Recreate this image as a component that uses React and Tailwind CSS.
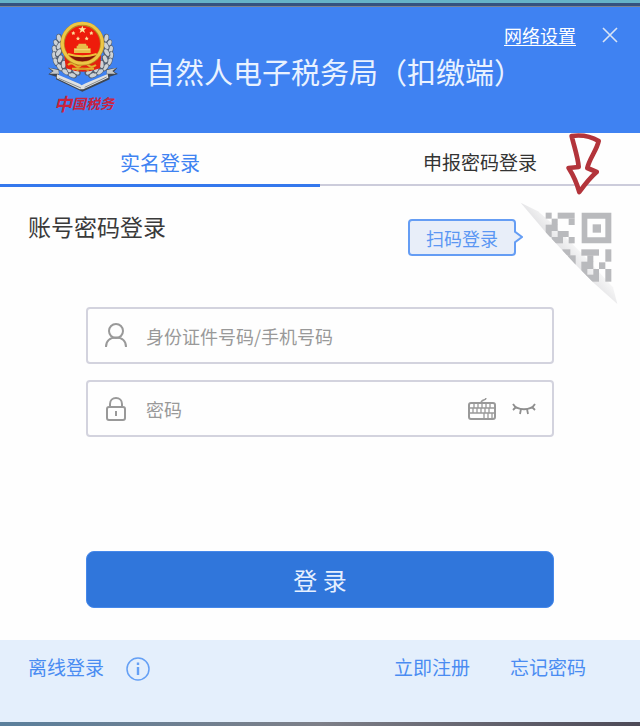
import React, { useState } from 'react';

const qrModules = [
  // top left block
  [83, 38, 18, 18], [119, 38, 51, 18], [101, 56, 18, 19], [152, 56, 18, 19],
  [83, 74, 36, 19], [83, 93, 18, 18], [119, 93, 33, 18], [101, 111, 34, 19], [152, 111, 18, 19],
  // bottom left block
  [133, 148, 24, 19], [150, 166, 23, 28],
  // bottom right block
  [190, 148, 53, 19], [262, 148, 18, 37], [208, 166, 18, 20], [190, 185, 36, 22],
  [243, 187, 19, 20], [190, 207, 18, 19], [226, 207, 17, 19], [262, 207, 18, 38], [204, 224, 39, 21],
];

// leaves of the wreath, mirrored around x = 116
const leaves = [
  [46, 58, -10], [38, 74, -25], [33, 92, -15], [32, 111, -10], [37, 129, -25], [49, 145, -40], [66, 158, -55], [86, 168, -70],
  [46, 82, 25], [44, 102, 30], [49, 121, 20], [60, 137, 5], [76, 150, -20], [98, 158, -50],
];

const Emblem = () => (
  <svg className="w-20 h-[76px]" viewBox="0 0 240 228" aria-hidden="true">
    {[false, true].map((flip) => (
      <g key={String(flip)} transform={flip ? 'translate(232 0) scale(-1 1)' : undefined}>
        {leaves.map(([x, y, r], i) => (
          <g key={i} transform={`translate(${x} ${y}) rotate(${r})`}>
            <ellipse rx="9" ry="14" fill="#56606e" />
            <ellipse cx="-1" cy="-1" rx="6" ry="11" fill="#cdd2d6" />
          </g>
        ))}
      </g>
    ))}
    <path d="M60 108 L76 122 H156 L172 108 L168 148 Q117 168 66 148 Z" fill="#e3210f" />
    <path d="M72 138 q10-10 20 0 t20 0 t20 0 t24 0 M84 149 h66" fill="none" stroke="#e2b22e" strokeWidth="6" />
    <path d="M98 155 q17-12 36 0" fill="none" stroke="#d39a25" strokeWidth="5" />
    <circle cx="115" cy="74" r="66" fill="#b78a22" />
    <circle cx="115" cy="73" r="60" fill="none" stroke="#edc746" strokeWidth="9" />
    <circle cx="115" cy="74" r="53" fill="#ee1c0b" />
    <path d="M73 106 Q116 120 158 106 Q140 127 115 127 Q90 127 73 106 Z" fill="#7c1709" />
    <path d="M72 105 Q116 119 158 105" fill="none" stroke="#efc13a" strokeWidth="6" />
    <path d="M98 80 h4 l2-6 h22 l2 6 h4 v8 h8 v14 h-50 v-14 h8 Z" fill="#e8bd49" />
    <path d="M92 92 h46" stroke="#f6dc7a" strokeWidth="3" />
    <polygon points="115,20 118,28 127,28 120,33 123,42 115,37 107,42 110,33 103,28 112,28" fill="#ffe8a0" />
    {[[88, 42], [142, 42], [102, 58], [128, 58]].map(([x, y]) => (
      <path key={`${x}-${y}`} d="M0-6 L2-2 L6-1 L3 2 L4 6 L0 4 L-4 6 L-3 2 L-6-1 L-2-2 Z" transform={`translate(${x} ${y})`} fill="#ffdf9a" />
    ))}
    {/* ribbon under the wreath */}
    <path d="M12 146 L44 151 L44 173 L115 202 L188 173 L188 151 L220 146 L210 158 L222 165 L197 173 L197 181 L115 218 L36 181 L36 173 L13 166 L25 157 Z" fill="#3f4652" />
    <path d="M15 147 L43 153 L45 164 L17 164 L29 156 Z M217 147 L189 153 L188 164 L215 164 L205 156 Z" fill="#c3c8cc" />
    <path d="M39 166 L106 194 L113 199 L125 193 L191 165 L193 176 L118 211 L107 211 L38 178 Z" fill="#e0e1e1" />
    <path d="M44 178 L111 207 M122 205 L188 174" stroke="#858b91" strokeWidth="3" />
  </svg>
);

const QrCorner = () => (
  <svg className="w-[102px] h-[110px]" viewBox="0 0 306 330" aria-hidden="true">
    <defs>
      <clipPath id="fold">
        <path d="M8 8 L306 0 V330 L298 312 L225 247 L171 192 L83 97 Z" />
      </clipPath>
      <linearGradient id="foldShade" gradientUnits="userSpaceOnUse" x1="124" y1="146" x2="162" y2="112">
        <stop offset="0" stopColor="#e4e4e6" />
        <stop offset="1" stopColor="#f9f9f9" />
      </linearGradient>
    </defs>
    <path d="M8 8 L60 34 L100 68 L196 165 L285 262 L298 312 L225 247 L171 192 L83 97 Z" fill="url(#foldShade)" />
    <g clipPath="url(#fold)" fill="#b9babd">
      {qrModules.map(([x, y, w, h]) => (
        <rect key={`${x}-${y}`} x={x} y={y} width={w} height={h} />
      ))}
      <path fillRule="evenodd" d="M191 38 H280 V130 H191 Z M208 56 V112 H262 V56 Z" />
      <rect x="224" y="73" width="25" height="25" />
    </g>
  </svg>
);

const UserIcon = () => (
  <svg className="w-6 h-7" viewBox="0 0 24 28" fill="none" stroke="#999" strokeWidth="2" aria-hidden="true">
    <circle cx="12" cy="9" r="7" />
    <path d="M2 25 C2 19 6 15.5 12 15.5 S22 19 22 25" />
  </svg>
);

const LockIcon = () => (
  <svg className="w-6 h-7" viewBox="0 0 24 28" fill="none" stroke="#999" strokeWidth="2" aria-hidden="true">
    <rect x="3" y="12" width="18" height="13" rx="2" />
    <path d="M6 12 V9 C6 5.500 8.500 3 12 3 S18 5.500 18 9 V12 M12 16 V21" />
  </svg>
);

const KeyboardIcon = () => (
  <svg className="w-7 h-6" viewBox="0 0 28 24" fill="none" stroke="#999" aria-hidden="true">
    <rect x="1" y="6" width="26" height="16" rx="2" strokeWidth="2" />
    <path d="M13 6 C13 2 18 4 18 1" strokeWidth="1.400" />
    <path d="M2 11 H26 M2 16 H26 M6 7 V11 M10 7 V11 M14 7 V11 M18 7 V11 M22 7 V11 M5 11 V16 M9 11 V16 M13 11 V16 M17 11 V16 M21 11 V16 M16 16 V21 M20 16 V21 M24 16 V21" strokeWidth="1.300" />
  </svg>
);

const ClosedEyeIcon = () => (
  <svg className="w-6 h-4" viewBox="0 0 24 16" fill="none" stroke="#8f8f8f" strokeWidth="1.800" aria-hidden="true">
    <path d="M1 3 C5 10 19 10 23 3 M4 6 L1 9 M9 8 L8 13 M15 8 L16 13 M20 6 L23 9" />
  </svg>
);

const App = () => {
  const [tab, setTab] = useState('real');
  const [account, setAccount] = useState('');
  const [password, setPassword] = useState('');
  const [visible, setVisible] = useState(false);

  const tabClass = (name) =>
    name === tab
      ? 'pt-2 border-b-[3px] border-[#3478ed] text-[#3f83f2] text-xl'
      : 'pt-2 border-b-2 border-[#ccccdb] mb-px text-[#333] text-[19px]';

  return (
    <div className="relative min-h-screen flex flex-col bg-[#fefefe] font-['Noto_Sans_CJK_SC',sans-serif]">
      <div className="h-[7px] bg-[#34527f] border-t-[3px] border-t-[#64b2c8] border-b border-b-[#7d8390]" />

      {/* Header */}
      <header className="relative flex h-[126px] bg-[#3f82f2] text-white">
        <div className="flex flex-col items-center ml-11 mt-3 w-20">
          <Emblem />
          <div className="flex items-center h-5 text-[#c9233f] font-['Liberation_Serif','Noto_Sans_CJK_SC',serif] font-bold italic text-sm leading-5">
            <span className="text-lg">中</span>国税务
          </div>
        </div>
        <h1 className="ml-[22px] mt-[42px] text-[29px] leading-[44px] text-[#e9f2ff] whitespace-nowrap">自然人电子税务局（扣缴端）</h1>
        <div className="absolute top-4 right-5 flex items-center gap-6">
          <a href="#settings" className="text-lg leading-6 underline underline-offset-2">网络设置</a>
          <button type="button" aria-label="关闭" className="w-5 h-6 flex items-center justify-center">
            <svg className="w-4 h-4" viewBox="0 0 16 16" stroke="#d9e4f5" strokeWidth="1.600" aria-hidden="true">
              <path d="M1 1 L15 15 M15 1 L1 15" />
            </svg>
          </button>
        </div>
      </header>

      {/* Login type tabs */}
      <div role="tablist" className="grid grid-cols-2 h-[54px]">
        <button type="button" role="tab" aria-selected={tab === 'real'} onClick={() => setTab('real')} className={tabClass('real')}>
          实名登录
        </button>
        <button type="button" role="tab" aria-selected={tab === 'declare'} onClick={() => setTab('declare')} className={tabClass('declare')}>
          申报密码登录
        </button>
      </div>

      <main className="flex-1 flex flex-col">
        <div className="flex justify-between pl-7 pr-5 pt-[13px]">
          <h2 className="mt-2 text-[23px] leading-9 text-[#3a3a3a]">账号密码登录</h2>
          <div className="flex items-start">
            <button type="button" className="relative mt-[19px] mr-0.5 w-[108px] h-[37px] rounded border-2 border-[#659df4] bg-[#e8eef9] text-[#5b97f3] text-lg leading-8">
              扫码登录
              <svg className="absolute -right-[9px] top-[10px] w-[9px] h-3" viewBox="0 0 9 12" aria-hidden="true">
                <path d="M0 0 L8 6 L0 12" fill="#e8eef9" stroke="#659df4" strokeWidth="2" />
              </svg>
            </button>
            <QrCorner />
          </div>
        </div>

        <form className="mx-[86px] -mt-[3px]" onSubmit={(e) => e.preventDefault()}>
          <div className="flex items-center h-[57px] px-4 rounded border-2 border-[#d3d3de]">
            <label htmlFor="account" aria-label="身份证件号码/手机号码"><UserIcon /></label>
            <input
              id="account"
              type="text"
              value={account}
              onChange={(e) => setAccount(e.target.value)}
              placeholder="身份证件号码/手机号码"
              className="flex-1 min-w-0 ml-[18px] text-lg text-[#333] placeholder:text-[#999] outline-none"
            />
          </div>
          <div className="flex items-center h-[57px] mt-4 px-4 rounded border-2 border-[#d3d3de]">
            <label htmlFor="password" aria-label="密码"><LockIcon /></label>
            <input
              id="password"
              type={visible ? 'text' : 'password'}
              value={password}
              onChange={(e) => setPassword(e.target.value)}
              placeholder="密码"
              className="flex-1 min-w-0 ml-[18px] text-lg text-[#333] placeholder:text-[#999] outline-none"
            />
            <button type="button" aria-label="软键盘"><KeyboardIcon /></button>
            <button type="button" aria-label="显示密码" className="ml-4" onClick={() => setVisible(!visible)}><ClosedEyeIcon /></button>
          </div>
          <button type="submit" className="block w-full h-[57px] mt-[114px] rounded-lg border border-[#4688ea] bg-[#3076db] text-[#e6f0ff] text-2xl">
            登 录
          </button>
        </form>
      </main>

      {/* Footer */}
      <footer className="flex items-start h-[82px] px-7 pt-[13px] bg-[#e4effc] text-[19px] leading-7 text-[#4a8cf2]">
        <a href="#offline">离线登录</a>
        <button type="button" aria-label="说明" className="ml-[22px] mt-1">
          <svg className="w-6 h-6" viewBox="0 0 24 24" fill="none" stroke="#65a0f5" strokeWidth="1.500" aria-hidden="true">
            <circle cx="12" cy="12" r="11" />
            <path d="M12 10 V18 M12 5.500 V8" strokeWidth="2.400" />
          </svg>
        </button>
        <a href="#register" className="ml-auto">立即注册</a>
        <a href="#forgot" className="ml-10 mr-[26px]">忘记密码</a>
      </footer>
      <div className="h-1 bg-gradient-to-r from-[#5a7f9c] via-[#7d7f88] to-[#4d4a57]" />

      {/* Arrow pointing at the QR corner */}
      <svg className="absolute right-[38px] top-[132px] w-9 h-16" viewBox="0 0 108 192" fill="none" aria-hidden="true">
        <path d="M17 12 C46 8 76 14 98 27 C92 55 70 80 64 108 L92 120 C72 137 56 158 40 180 C33 155 22 130 8 108 L38 105 C36 76 24 43 17 12 Z" fill="#fefefe" stroke="#b3343b" strokeWidth="14" strokeLinejoin="round" />
      </svg>
    </div>
  );
};

export default App;
